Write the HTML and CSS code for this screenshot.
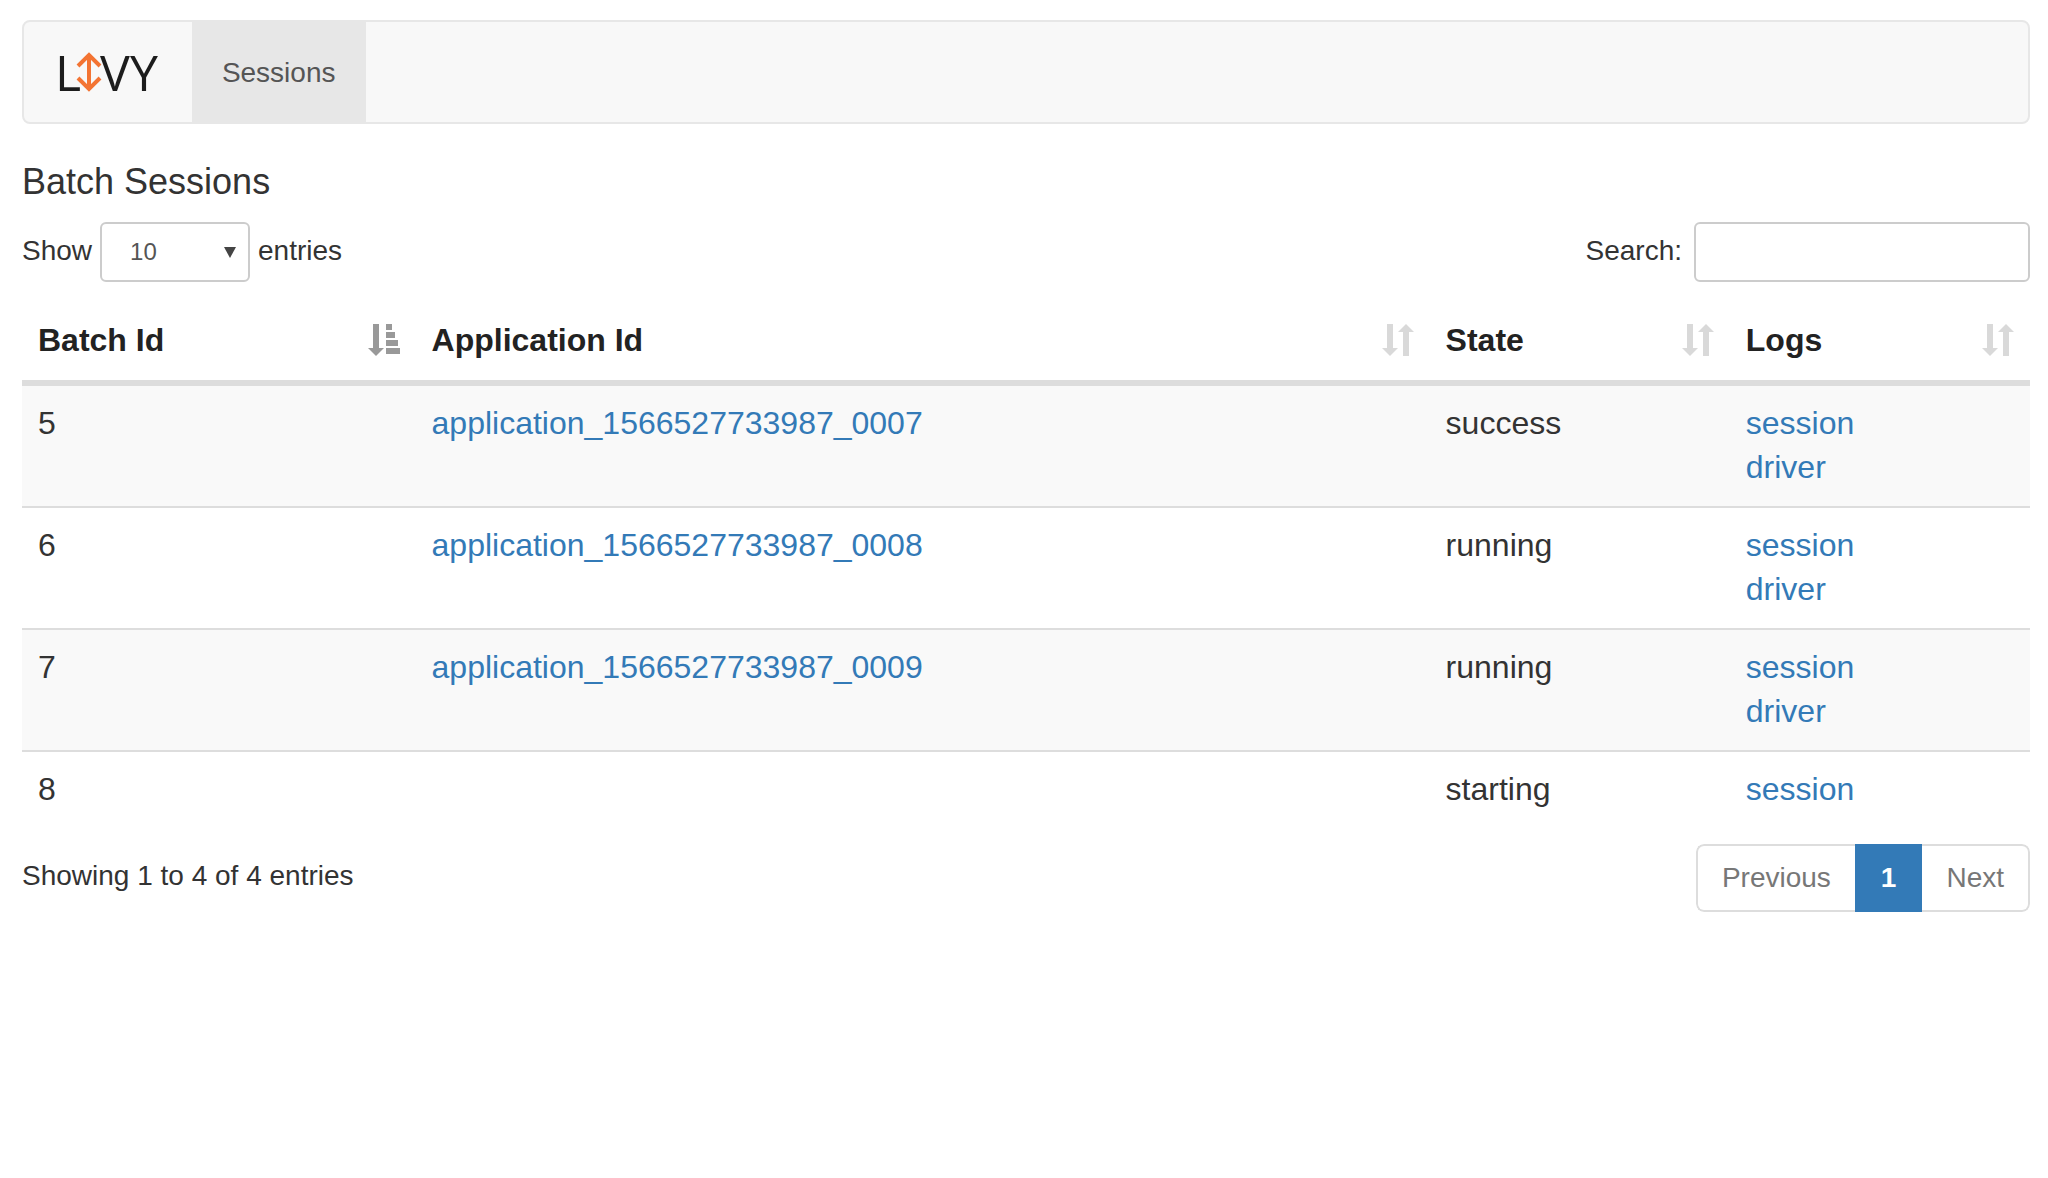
FILE: index.html
```html
<!DOCTYPE html>
<html lang="en">
<head>
<meta charset="utf-8">
<meta name="viewport" content="width=device-width, initial-scale=1">
<title>Livy - Sessions</title>
<link rel="stylesheet" href="styles.css">
</head>
<body>
<svg width="0" height="0" class="sprite" aria-hidden="true">
  <symbol id="sort-both" viewBox="0 0 32 32">
    <path d="M5 0h6v24h5l-8 8-8-8h5zM24 0l8 8h-5v24h-6V8h-5z"/>
  </symbol>
  <symbol id="sort-asc" viewBox="0 0 32 32">
    <path d="M5 0h6v24h5l-8 8-8-8h5zM18 0h6v6h-6zM18 8h9v6h-9zM18 16h12v6H18zM18 24h14v6H18z"/>
  </symbol>
</svg>

<nav class="navbar">
  <a class="brand" href="#" aria-label="Livy home">
    <span>L</span>
    <svg class="brand-arrow" viewBox="0 0 26 40" aria-hidden="true">
      <path d="M13 2v36M2 14L13 3l11 11M2 26l11 11 11-11"/>
    </svg>
    <span>VY</span>
  </a>
  <a class="nav-link" href="#">Sessions</a>
</nav>

<main>
  <h1 class="title">Batch Sessions</h1>

  <div class="controls">
    <div class="field length">
      <label for="length">Show</label>
      <span class="select">
        <select id="length">
          <option>10</option>
          <option>25</option>
          <option>50</option>
          <option>100</option>
        </select>
        <svg viewBox="0 0 12 11" aria-hidden="true"><path d="M0 0h12L6 11z"/></svg>
      </span>
      <span>entries</span>
    </div>
    <div class="field search">
      <label for="search">Search:</label>
      <input id="search" type="search">
    </div>
  </div>

  <table class="sessions">
    <colgroup>
      <col class="col-id"><col class="col-app"><col class="col-state"><col class="col-logs">
    </colgroup>
    <thead>
      <tr>
        <th scope="col" aria-sort="ascending"><button class="sort active" type="button">Batch Id<svg aria-hidden="true"><use href="#sort-asc"/></svg></button></th>
        <th scope="col"><button class="sort" type="button">Application Id<svg aria-hidden="true"><use href="#sort-both"/></svg></button></th>
        <th scope="col"><button class="sort" type="button">State<svg aria-hidden="true"><use href="#sort-both"/></svg></button></th>
        <th scope="col"><button class="sort" type="button">Logs<svg aria-hidden="true"><use href="#sort-both"/></svg></button></th>
      </tr>
    </thead>
    <tbody>
      <tr>
        <td>5</td>
        <td><a href="#">application_1566527733987_0007</a></td>
        <td>success</td>
        <td><a href="#">session</a><br><a href="#">driver</a></td>
      </tr>
      <tr>
        <td>6</td>
        <td><a href="#">application_1566527733987_0008</a></td>
        <td>running</td>
        <td><a href="#">session</a><br><a href="#">driver</a></td>
      </tr>
      <tr>
        <td>7</td>
        <td><a href="#">application_1566527733987_0009</a></td>
        <td>running</td>
        <td><a href="#">session</a><br><a href="#">driver</a></td>
      </tr>
      <tr>
        <td>8</td>
        <td></td>
        <td>starting</td>
        <td><a href="#">session</a></td>
      </tr>
    </tbody>
  </table>

  <div class="footer">
    <p class="info">Showing 1 to 4 of 4 entries</p>
    <div class="pagination">
      <button type="button">Previous</button>
      <button type="button" class="current" aria-current="page">1</button>
      <button type="button">Next</button>
    </div>
  </div>
</main>
</body>
</html>
```
FILE: styles.css
```css
* {
  box-sizing: border-box;
}

body {
  margin: 0;
  padding: 20px 18px 20px 22px;
  background: #fff;
  color: #333;
  font: 28px/40px "Liberation Sans", Arial, sans-serif;
}

button,
input,
select {
  font: inherit;
  color: inherit;
}

a {
  color: #337ab7;
  text-decoration: none;
}

.sprite {
  position: absolute;
}

/* Navigation bar */
.navbar {
  display: flex;
  align-items: stretch;
  min-height: 104px;
  border: 2px solid #e7e7e7;
  border-radius: 8px;
  background: #f8f8f8;
}

.brand {
  display: flex;
  align-items: center;
  padding: 0 34px 0 31px;
  color: #1c1c1c;
  font-family: "Open Sans", sans-serif;
  font-size: 50px;
}

.brand-arrow {
  width: 26px;
  height: 40px;
  margin: 0 -2px 0 -5px;
  fill: none;
  stroke: #f37433;
  stroke-width: 4;
}

.nav-link {
  display: flex;
  align-items: center;
  padding: 2px 30px 0;
  background: #e7e7e7;
  color: #555;
}

.title {
  margin: 38px 0 20px;
  font-size: 36px;
  font-weight: 400;
  line-height: 40px;
}

/* Length and search controls */
.controls {
  display: flex;
  justify-content: space-between;
  align-items: baseline;
}

.field {
  display: flex;
  align-items: baseline;
  gap: 8px;
}

.search {
  gap: 12px;
}

.select {
  display: grid;
  align-items: center;
}

.select select,
.select svg {
  grid-area: 1 / 1;
}

.select svg {
  width: 12px;
  height: 11px;
  margin-right: 14px;
  justify-self: end;
  fill: #444;
  pointer-events: none;
}

select,
input {
  height: 60px;
  border: 2px solid #ccc;
  border-radius: 6px;
  background: #fff;
  color: #555;
  font-size: 24px;
  appearance: none;
}

select {
  width: 150px;
  padding: 0 28px;
}

input {
  width: 336px;
  padding: 0 20px;
}

/* Sessions table */
.sessions {
  width: 100%;
  margin: 22px 0 16px;
  border-spacing: 0;
  table-layout: fixed;
  font-size: 32px;
  line-height: 44px;
}

.col-id {
  width: 19.6%;
}

.col-app {
  width: 50.5%;
}

th,
td {
  padding: 15px 16px 17px;
  text-align: left;
  vertical-align: top;
}

th {
  padding: 14px 16px 18px;
  border-bottom: 6px solid #ddd;
}

tbody tr:nth-child(odd) {
  background: #f9f9f9;
}

tbody tr + tr td {
  border-top: 2px solid #ddd;
}

.sort {
  display: flex;
  align-items: center;
  justify-content: space-between;
  width: 100%;
  padding: 0;
  border: 0;
  background: none;
  color: #222;
  font-weight: 700;
  cursor: pointer;
}

.sort svg {
  width: 32px;
  height: 32px;
  fill: #d9d9d9;
}

.sort.active svg {
  fill: #999;
}

/* Info and pagination */
.footer {
  display: flex;
  justify-content: space-between;
  align-items: flex-start;
}

.info {
  margin: 12px 0 0;
}

.pagination {
  display: flex;
  overflow: hidden;
  border-radius: 8px;
}

.pagination button {
  padding: 12px 24px;
  border: 2px solid #ddd;
  background: #fff;
  color: #777;
}

.pagination button:first-child {
  border-right: 0;
  border-radius: 8px 0 0 8px;
}

.pagination button:last-child {
  border-left: 0;
  border-radius: 0 8px 8px 0;
}

.pagination .current {
  border-color: #337ab7;
  background: #337ab7;
  color: #fff;
  font-weight: 700;
}
```
